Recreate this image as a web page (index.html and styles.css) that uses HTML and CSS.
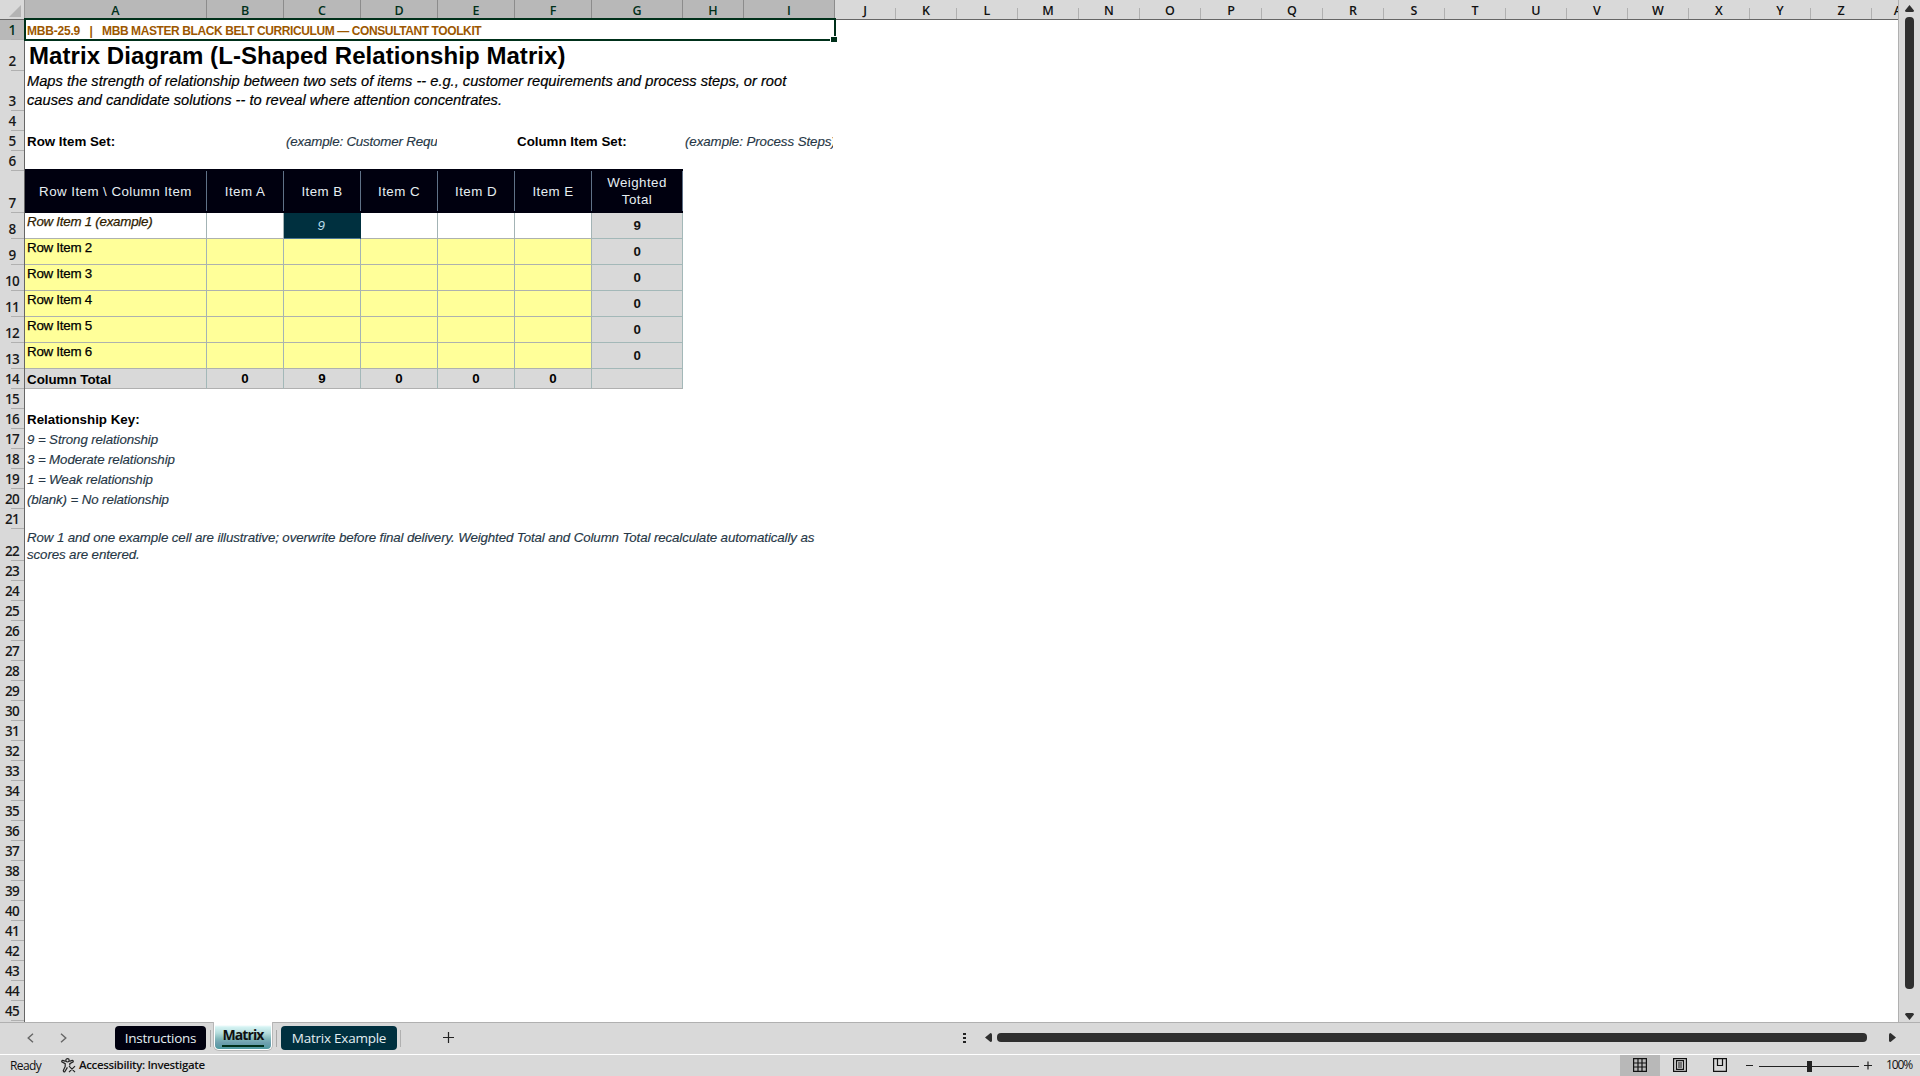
FILE: index.html
```html
<!DOCTYPE html>
<html lang="en">
<head>
    <meta charset="UTF-8">
    <meta name="viewport" content="width=device-width, initial-scale=1.0">
    <title>Matrix Diagram</title>
    <link rel="stylesheet" href="styles.css">
</head>
<body>
    <div class="main">
        <div class="sheet">
            <div class="col-heads" id="colHeads">
                <div class="corner"><svg width="12" height="12"><path d="M12 0V12H0Z" fill="#b4b4b4"/></svg></div>
            </div>

            <div class="row h20 selected"><div class="num">1</div><div class="cell merged kicker">MBB-25.9 &nbsp; | &nbsp; <span>MBB MASTER BLACK BELT CURRICULUM — CONSULTANT TOOLKIT</span></div></div>
            <div class="row h31"><div class="num">2</div><div class="cell merged title">Matrix Diagram (L-Shaped Relationship Matrix)</div></div>
            <div class="row h40"><div class="num">3</div><div class="cell merged desc">Maps the strength of relationship between two sets of items -- e.g., customer requirements and process steps, or root<br>causes and candidate solutions -- to reveal where attention concentrates.</div></div>
            <div class="row h20"><div class="num">4</div></div>
            <div class="row h20">
                <div class="num">5</div>
                <div class="cell a bold">Row Item Set:</div>
                <div class="cell b"></div>
                <div class="cell cd example">(example: Customer Requirements)</div>
                <div class="cell b"></div>
                <div class="cell fg bold">Column Item Set:</div>
                <div class="cell hi example steps">(example: Process Steps)</div>
            </div>
            <div class="row h20"><div class="num">6</div></div>

            <div class="row h42 table-head">
                <div class="num">7</div>
                <div class="cell a">Row Item \ Column Item</div>
                <div class="cell b">Item A</div>
                <div class="cell b">Item B</div>
                <div class="cell b">Item C</div>
                <div class="cell b">Item D</div>
                <div class="cell b">Item E</div>
                <div class="cell g">Weighted<br>Total</div>
            </div>
            <div class="row h26 item sample">
                <div class="num">8</div>
                <div class="cell a">Row Item 1 (example)</div>
                <div class="cell b"></div>
                <div class="cell b strong">9</div>
                <div class="cell b"></div>
                <div class="cell b"></div>
                <div class="cell b"></div>
                <div class="cell g total">9</div>
            </div>
            <div class="row h26 item"><div class="num">9</div><div class="cell a">Row Item 2</div><div class="cell b"></div><div class="cell b"></div><div class="cell b"></div><div class="cell b"></div><div class="cell b"></div><div class="cell g total">0</div></div>
            <div class="row h26 item"><div class="num">10</div><div class="cell a">Row Item 3</div><div class="cell b"></div><div class="cell b"></div><div class="cell b"></div><div class="cell b"></div><div class="cell b"></div><div class="cell g total">0</div></div>
            <div class="row h26 item"><div class="num">11</div><div class="cell a">Row Item 4</div><div class="cell b"></div><div class="cell b"></div><div class="cell b"></div><div class="cell b"></div><div class="cell b"></div><div class="cell g total">0</div></div>
            <div class="row h26 item"><div class="num">12</div><div class="cell a">Row Item 5</div><div class="cell b"></div><div class="cell b"></div><div class="cell b"></div><div class="cell b"></div><div class="cell b"></div><div class="cell g total">0</div></div>
            <div class="row h26 item"><div class="num">13</div><div class="cell a">Row Item 6</div><div class="cell b"></div><div class="cell b"></div><div class="cell b"></div><div class="cell b"></div><div class="cell b"></div><div class="cell g total">0</div></div>
            <div class="row h20 sums">
                <div class="num">14</div>
                <div class="cell a">Column Total</div>
                <div class="cell b">0</div>
                <div class="cell b">9</div>
                <div class="cell b">0</div>
                <div class="cell b">0</div>
                <div class="cell b">0</div>
                <div class="cell g"></div>
            </div>

            <div class="row h20"><div class="num">15</div></div>
            <div class="row h20"><div class="num">16</div><div class="cell a bold">Relationship Key:</div></div>
            <div class="row h20"><div class="num">17</div><div class="cell a key">9 = Strong relationship</div></div>
            <div class="row h20"><div class="num">18</div><div class="cell a key">3 = Moderate relationship</div></div>
            <div class="row h20"><div class="num">19</div><div class="cell a key">1 = Weak relationship</div></div>
            <div class="row h20"><div class="num">20</div><div class="cell a key">(blank) = No relationship</div></div>
            <div class="row h20"><div class="num">21</div></div>
            <div class="row h32"><div class="num">22</div><div class="cell merged note">Row 1 and one example cell are illustrative; overwrite before final delivery. Weighted Total and Column Total recalculate automatically as<br>scores are entered.</div></div>
            <div id="emptyRows"></div>

            <div class="selection"><i></i></div>
        </div>

        <div class="vscroll">
            <svg width="9" height="7"><path d="M4.5 0L9 5.5Q9 7 7.5 7H1.5Q0 7 0 5.5Z" fill="#2f2f2f"/></svg>
            <div class="vthumb"></div>
            <svg width="9" height="7"><path d="M4.5 7L9 1.5Q9 0 7.5 0H1.5Q0 0 0 1.5Z" fill="#2f2f2f"/></svg>
        </div>
    </div>

    <div class="tabbar">
        <div class="arrows">
            <svg width="7" height="10" fill="none" stroke="#666" stroke-width="1.4"><path d="M6 .8L1.2 5L6 9.2"/></svg>
            <svg width="7" height="10" fill="none" stroke="#666" stroke-width="1.4"><path d="M1 .8L5.8 5L1 9.2"/></svg>
        </div>
        <div class="tab dark">Instructions</div>
        <div class="active-wrap"><div class="tab active"><span>Matrix</span></div></div>
        <div class="tab teal">Matrix Example</div>
        <div class="sep"></div>
        <svg class="add" width="11" height="11" stroke="#222" stroke-width="1.2"><path d="M5.5 0V11M0 5.5H11"/></svg>
        <div class="hscroll">
            <svg width="3" height="12" fill="#222"><path d="M0 1H3V3H0ZM0 5H3V7H0ZM0 9H3V11H0Z"/></svg>
            <svg class="left" width="7" height="9"><path d="M0 4.5L5.5 0Q7 0 7 1.5V7.5Q7 9 5.5 9Z" fill="#2f2f2f"/></svg>
            <div class="hthumb"></div>
            <svg class="right" width="7" height="9"><path d="M7 4.5L1.5 0Q0 0 0 1.5V7.5Q0 9 1.5 9Z" fill="#2f2f2f"/></svg>
        </div>
    </div>

    <div class="status">
        <span class="ready">Ready</span>
        <svg class="access" width="15" height="15" fill="none" stroke="#222" stroke-width="1.2">
            <circle cx="6.5" cy="2.3" r="1.7"/>
            <path d="M4.7 3.4L1.7 2.4Q.5 2.4 .8 3.8L4.2 5.6V8.4L2.3 12.6Q2.6 14.3 3.9 13.6L6.4 9.4M8.3 3.4L11.3 2.4Q12.5 2.4 12.2 3.8L8.8 5.6V7.6M8 8.2L14 14.2M14 8.2L8 14.2"/>
        </svg>
        <span class="acc-text">Accessibility: Investigate</span>
        <div class="views">
            <div class="view on"><svg width="14" height="14" fill="none" stroke="#111" stroke-width="1.2"><path d="M.6 .6H13.4V13.4H.6ZM5 0V14M9 0V14M0 5H14M0 9H14"/></svg></div>
            <div class="view"><svg width="14" height="14" fill="none" stroke="#111" stroke-width="1.2"><path d="M.6 .6H13.4V13.4H.6ZM3.5 2.6H10.5V11.4H3.5ZM5 5H9M5 7H9M5 9H9"/></svg></div>
            <div class="view"><svg width="14" height="14" fill="none" stroke="#111" stroke-width="1.2"><path d="M.6 .6H13.4V13.4H.6ZM4.5 0V7.5H9.5V0"/></svg></div>
        </div>
        <svg class="zoom" width="126" height="12" stroke="#222" stroke-width="1.2">
            <path d="M0 5.5H7M13 6.5H113M118 5.5H126M122 1.5V9.5"/>
            <rect x="61" y="1" width="5" height="11" fill="#222" stroke="none"/>
        </svg>
        <span class="pct">100%</span>
    </div>

    <script>
        var widths = { A: 182, G: 91, I: 91 };
        var heads = document.getElementById('colHeads');
        var letters = 'ABCDEFGHIJKLMNOPQRSTUVWXYZ'.split('').concat('AA');

        letters.forEach(function(letter, i) {
            var head = document.createElement('div');
            var width = widths[letter] || (i < 7 ? 77 : 61);
            head.className = i < 9 ? 'col on' : 'col';
            head.style.width = width + 'px';
            head.textContent = letter;
            heads.appendChild(head);
        });

        // Blank rows below the notes
        var html = '';
        for (var n = 23; n <= 46; n++) {
            html += '<div class="row h20"><div class="num">' + (n < 46 ? n : '') + '</div></div>';
        }
        document.getElementById('emptyRows').innerHTML = html;
    </script>
</body>
</html>
```
FILE: styles.css
```css
* {
    box-sizing: border-box;
}

body {
    margin: 0;
    height: 1076px;
    display: flex;
    flex-direction: column;
    overflow: hidden;
    background: #d9d9d9;
    font-family: "Liberation Sans", Arial, sans-serif;
    font-size: 13.33px;
    color: #000;
}

svg {
    display: block;
    flex: none;
}

.main {
    display: flex;
    height: 1023px;
    border-bottom: 1px solid #b0b0b0;
}

.sheet {
    position: relative;
    width: 1899px;
    overflow: hidden;
    background: #fff;
    border-right: 1px solid #b0b0b0;
}

/* Column and row headers */
.col-heads {
    display: flex;
    height: 20px;
    background: #d9d9d9;
    border-bottom: 1px solid #666;
}

.corner {
    flex: none;
    width: 25px;
    padding: 5px 0 0 9px;
    border-right: 1px solid #999;
}

.col {
    flex: none;
    padding-right: 1px;
    line-height: 21px;
    text-align: center;
    font-family: "Open Sans", sans-serif;
    font-size: 12.5px;
    font-weight: 600;
    color: #111;
    background: linear-gradient(#b0b0b0, #b0b0b0) right bottom / 1px 11px no-repeat;
}

.col.on {
    padding-right: 0;
    color: #00301a;
    background: #b8b8b8;
    border-right: 1px solid #8c8c8c;
}

.row {
    display: flex;
}

.h20 { height: 20px; }
.h26 { height: 26px; }
.h31 { height: 31px; }
.h32 { height: 32px; }
.h40 { height: 40px; }
.h42 { height: 42px; }

.num {
    flex: none;
    display: flex;
    align-items: flex-end;
    justify-content: center;
    width: 25px;
    line-height: 19px;
    font-family: "Open Sans", sans-serif;
    font-size: 13.5px;
    font-weight: 600;
    letter-spacing: -0.8px;
    color: #1a1a1a;
    background: linear-gradient(#b0b0b0, #b0b0b0) right bottom / 13px 1px no-repeat #d9d9d9;
    border-right: 1px solid #666;
}

.selected .num {
    background-color: #b8b8b8;
    color: #00301a;
}

/* Cells */
.cell {
    flex: none;
    display: flex;
    align-items: flex-end;
    padding-left: 2px;
    line-height: 18px;
    white-space: nowrap;
    overflow: hidden;
}

.a { width: 182px; }
.b { width: 77px; }
.cd { width: 153px; margin-right: 1px; }
.g { width: 91px; }
.fg { width: 168px; }
.hi { width: 150px; }
.merged { width: 810px; }

.bold {
    font-weight: bold;
}

.kicker {
    font-size: 12px;
    font-weight: bold;
    letter-spacing: -0.2px;
    color: #9c5700;
    white-space: pre;
}

.kicker span {
    letter-spacing: -0.4px;
}

.title {
    align-items: center;
    padding-left: 4px;
    font-size: 24px;
    font-weight: bold;
    line-height: 31px;
    letter-spacing: 0.07px;
}

.desc {
    display: block;
    padding-top: 1px;
    font-size: 14.67px;
    font-style: italic;
    line-height: 19px;
    -webkit-text-stroke: 0.2px;
}

.example,
.key,
.note {
    font-style: italic;
    color: #263746;
    letter-spacing: -0.12px;
    -webkit-text-stroke: 0.15px;
}

.example {
    letter-spacing: -0.18px;
}

.example.steps {
    letter-spacing: -0.08px;
}

.note {
    display: block;
    line-height: 17px;
}

/* Matrix */
.table-head .cell {
    align-items: center;
    justify-content: center;
    height: 44px;
    margin-top: -2px;
    padding: 0 1px 0 0;
    line-height: 17px;
    text-align: center;
    letter-spacing: 0.45px;
    color: #e6eef2;
    background: linear-gradient(#5f7187, #5f7187) right 2px / 1px 40px no-repeat #00000f;
}

.item .cell {
    align-items: flex-start;
    background: #ffff99;
    border-right: 1px solid #a3b3b5;
    border-bottom: 1px solid #aeb2ae;
    letter-spacing: -0.25px;
    -webkit-text-stroke: 0.25px;
}

.sample .cell {
    background: #fff;
    font-style: italic;
}

.sample .a {
    color: #2e1c00;
}

.item .strong {
    justify-content: center;
    padding: 4px 2px 0 0;
    color: #b9dbe8;
    background: #00303f;
    border-color: #00303f;
    border-bottom-color: #4e7896;
    -webkit-text-stroke: 0;
}

.item .total {
    justify-content: center;
    padding: 4px 0 0;
    font-style: normal;
    font-weight: bold;
    color: #111;
    background: #d9d9d9;
    border-color: #a3b8b8;
    -webkit-text-stroke: 0;
}

.sums .cell {
    font-weight: bold;
    background: #d9d9d9;
    border-right: 1px solid #a3b8b8;
    border-bottom: 1px solid #b0b0b0;
    line-height: 17px;
}

.sums .b {
    justify-content: center;
    padding: 0 0 1px;
}

.selection {
    position: absolute;
    left: 24px;
    top: 18px;
    width: 812px;
    height: 23px;
    border: 2px solid #00301a;
}

.selection i {
    position: absolute;
    right: -3px;
    bottom: -3px;
    width: 7px;
    height: 6px;
    background: #00301a;
    border: solid #fff;
    border-width: 1px 0 0 1px;
}

/* Scrollbars */
.vscroll {
    display: flex;
    flex-direction: column;
    align-items: center;
    width: 21px;
    padding: 5px 1px 0 0;
}

.vthumb {
    width: 9px;
    height: 972px;
    margin: 5px 0 24px;
    border-radius: 4px;
    background: #2f2f2f;
}

.hscroll {
    display: flex;
    align-items: center;
    margin-left: 509px;
    height: 29px;
}

.hscroll .left {
    margin-left: 19px;
}

.hthumb {
    width: 870px;
    height: 9px;
    margin: 0 22px 0 5px;
    border-radius: 4px;
    background: #2f2f2f;
}

/* Sheet tabs */
.tabbar {
    display: flex;
    align-items: flex-start;
    height: 32px;
    border-bottom: 1px solid #fff;
}

.arrows {
    display: flex;
    gap: 26px;
    width: 115px;
    padding: 10px 0 0 27px;
}

.tab {
    height: 24px;
    margin-top: 3px;
    border-radius: 4px;
    line-height: 24px;
    text-align: center;
    font-family: "Open Sans", sans-serif;
    font-size: 13.5px;
    letter-spacing: -0.25px;
    color: #e4eef2;
}

.dark {
    width: 91px;
    background: #00000f;
}

.teal {
    width: 116px;
    background: #00303f;
}

.active-wrap {
    width: 75px;
    height: 28px;
    margin-top: -1px;
    padding: 0 8px;
    background:
        linear-gradient(#a8a8a8, #a8a8a8) 4px 8px / 1px 17px no-repeat,
        linear-gradient(#a8a8a8, #a8a8a8) 70px 8px / 1px 17px no-repeat;
}

.active {
    width: 58px;
    height: 28px;
    margin: 0;
    border: 1px solid #fff;
    border-top: 0;
    border-radius: 0 0 5px 5px;
    background: linear-gradient(#fff 3px, #d5f3f3 5px, #b5dcdc 11px, #7fb5b8 17px, #6f9fae 21px, #4f9a9f);
    box-shadow: 0 0 0 1px #b8b8b8;
    line-height: 26px;
    font-size: 14px;
    font-weight: bold;
    letter-spacing: -0.9px;
    color: #111;
}

.active span {
    display: block;
    width: 42px;
    height: 25px;
    margin: 0 auto;
    border-bottom: 2px solid #00301a;
}

.sep {
    width: 1px;
    height: 17px;
    margin: 7px 0 0 3px;
    background: #b0b0b0;
}

.add {
    margin: 9px 0 0 42px;
}

/* Status bar */
.status {
    display: flex;
    align-items: center;
    height: 21px;
    font-family: "Open Sans", sans-serif;
    font-size: 12px;
    color: #111;
}

.ready {
    width: 50px;
    padding-left: 10px;
    letter-spacing: -0.6px;
}

.access {
    margin-left: 11px;
}

.acc-text {
    margin: -2px 0 0 3px;
    font-size: 11.5px;
    font-weight: 600;
    letter-spacing: -0.35px;
}

.views {
    display: flex;
    margin-left: auto;
}

.view {
    width: 40px;
    height: 21px;
    padding: 3px 0 0 13px;
}

.view.on {
    background: #b8b8b8;
}

.zoom {
    margin-left: 6px;
}

.pct {
    width: 34px;
    margin: -2px 0 0 14px;
    letter-spacing: -1.1px;
}
```
